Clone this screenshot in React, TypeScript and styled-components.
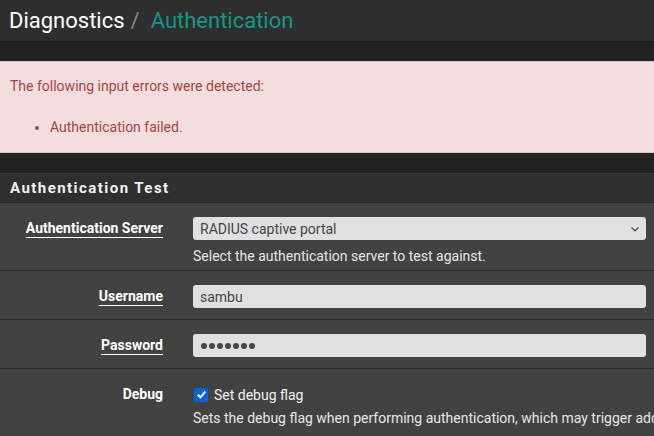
import React from "react";
import styled, { createGlobalStyle } from "styled-components";

const Global = createGlobalStyle`
  html, body { margin: 0; padding: 0; background: #212121; }
  body { font-family: Roboto, "Noto Sans", "Liberation Sans", sans-serif; overflow: hidden; }
  * { box-sizing: border-box; }
`;

const Page = styled.div`
  width: 654px;
  height: 436px;
  overflow: hidden;
  background: #212121;
  display: flex;
  flex-direction: column;
`;

const Header = styled.div`
  height: 41px;
  background: #2e2e2e;
  display: flex;
  align-items: center;
  padding-left: 9px;
  padding-bottom: 1px;
  font-size: 22px;
  white-space: nowrap;
  flex-shrink: 0;
`;

const Crumb = styled.span<{ $active?: boolean }>`
  color: ${(p) => (p.$active ? "#149786" : "#ffffff")};
`;

const Sep = styled.span`
  color: #8a8a8a;
  padding: 0 11px 0 6px;
`;

const Gap = styled.div`
  height: 20px;
  flex-shrink: 0;
`;

const Alert = styled.div`
  background: #f2dede;
  border-top: 1px solid #e4c3c7;
  border-bottom: 1px solid #e4c3c7;
  color: #a94442;
  padding: 14px 10px 15px;
  font-size: 14px;
  line-height: 20px;
  flex-shrink: 0;
`;

const AlertText = styled.div``;

const ErrorList = styled.ul`
  margin: 21px 0 0;
  padding-left: 40px;
`;

const Panel = styled.div`
  display: flex;
  flex-direction: column;
  flex: 1;
  background: #424242;
`;

const PanelHeading = styled.div`
  height: 29px;
  background: #2f2f2f;
  border-top: 1px solid #3a3a3a;
  display: flex;
  align-items: center;
  padding-left: 10px;
  color: #f2f2f2;
  font-weight: 700;
  font-size: 15px;
  letter-spacing: 1.45px;
  flex-shrink: 0;
`;

const Row = styled.div<{ $pt?: number; $pb?: number }>`
  display: flex;
  border-top: 1px solid #2a2a2a;
  padding: ${(p) => p.$pt ?? 14}px 0 ${(p) => p.$pb ?? 11}px;
  flex-shrink: 0;
`;

const LabelCol = styled.div`
  width: 178px;
  padding-right: 15px;
  display: flex;
  justify-content: flex-end;
  align-items: flex-start;
  flex-shrink: 0;
`;

const Label = styled.span<{ $required?: boolean }>`
  color: #ffffff;
  font-weight: 700;
  font-size: 14px;
  line-height: 23px;
  white-space: nowrap;
  text-decoration: ${(p) => (p.$required ? "underline" : "none")};
  text-underline-offset: 4px;
  text-decoration-thickness: 1px;
`;

const FieldCol = styled.div`
  flex: 1;
  padding-left: 15px;
  padding-right: 8px;
  display: flex;
  flex-direction: column;
  min-width: 0;
`;

const SelectBox = styled.div`
  height: 23px;
  background: #e0e0e0;
  border-radius: 3px;
  display: flex;
  align-items: center;
  justify-content: space-between;
  padding: 0 6px 0 7px;
  color: #454545;
  font-size: 14px;
`;

const TextInput = styled.input`
  height: 23px;
  width: 100%;
  background: #e0e0e0;
  border: none;
  border-radius: 3px;
  padding: 0 7px;
  color: #454545;
  font-family: Roboto, "Noto Sans", sans-serif;
  font-size: 14px;
  outline: none;
`;

const PasswordBox = styled.div`
  height: 23px;
  background: #e0e0e0;
  border-radius: 3px;
  padding: 0 8px;
  display: flex;
  align-items: center;
  gap: 2px;
`;

const Dot = styled.span`
  width: 6px;
  height: 6px;
  border-radius: 50%;
  background: #464646;
`;

const Help = styled.div<{ $mt?: number }>`
  margin-top: ${(p) => p.$mt ?? 6}px;
  color: #e6e6e6;
  font-size: 14px;
  line-height: 20px;
  white-space: nowrap;
`;

const CheckLine = styled.label`
  display: flex;
  align-items: center;
  height: 23px;
  color: #f0f0f0;
  font-size: 14px;
  gap: 6px;
  white-space: nowrap;
`;

const Check = styled.span`
  width: 14px;
  height: 14px;
  border-radius: 2px;
  background: #0b62d6;
  display: inline-flex;
  align-items: center;
  justify-content: center;
  margin-left: 1px;
`;

const dots = [0, 1, 2, 3, 4, 5, 6];

export default function App() {
  return (
    <>
      <Global />
      <Page>
        <Header>
          <Crumb>Diagnostics</Crumb>
          <Sep>/</Sep>
          <Crumb $active>Authentication</Crumb>
        </Header>
        <Gap />
        <Alert>
          <AlertText>The following input errors were detected:</AlertText>
          <ErrorList>
            <li>Authentication failed.</li>
          </ErrorList>
        </Alert>
        <Gap />
        <Panel>
          <PanelHeading>Authentication Test</PanelHeading>
          <Row $pt={14} $pb={4}>
            <LabelCol>
              <Label $required>Authentication Server</Label>
            </LabelCol>
            <FieldCol>
              <SelectBox>
                <span>RADIUS captive portal</span>
                <svg width="10" height="10" viewBox="0 0 10 10">
                  <path d="M1.5 3.5 L5 6.8 L8.5 3.5" fill="none" stroke="#555" strokeWidth="1.3" />
                </svg>
              </SelectBox>
              <Help>Select the authentication server to test against.</Help>
            </FieldCol>
          </Row>
          <Row>
            <LabelCol>
              <Label $required>Username</Label>
            </LabelCol>
            <FieldCol>
              <TextInput type="text" value="sambu" readOnly />
            </FieldCol>
          </Row>
          <Row>
            <LabelCol>
              <Label $required>Password</Label>
            </LabelCol>
            <FieldCol>
              <PasswordBox aria-label="Password">
                {dots.map((d) => (
                  <Dot key={d} />
                ))}
              </PasswordBox>
            </FieldCol>
          </Row>
          <Row $pt={14} $pb={10}>
            <LabelCol>
              <Label>Debug</Label>
            </LabelCol>
            <FieldCol>
              <CheckLine>
                <Check>
                  <svg width="11" height="11" viewBox="0 0 11 11">
                    <path d="M1.8 5.8 L4.4 8.3 L9.3 2.6" fill="none" stroke="#fff" strokeWidth="1.9" />
                  </svg>
                </Check>
                Set debug flag
              </CheckLine>
              <Help $mt={2}>
                Sets the debug flag when performing authentication, which may trigger additional diagnostic log output.
              </Help>
            </FieldCol>
          </Row>
        </Panel>
      </Page>
    </>
  );
}
